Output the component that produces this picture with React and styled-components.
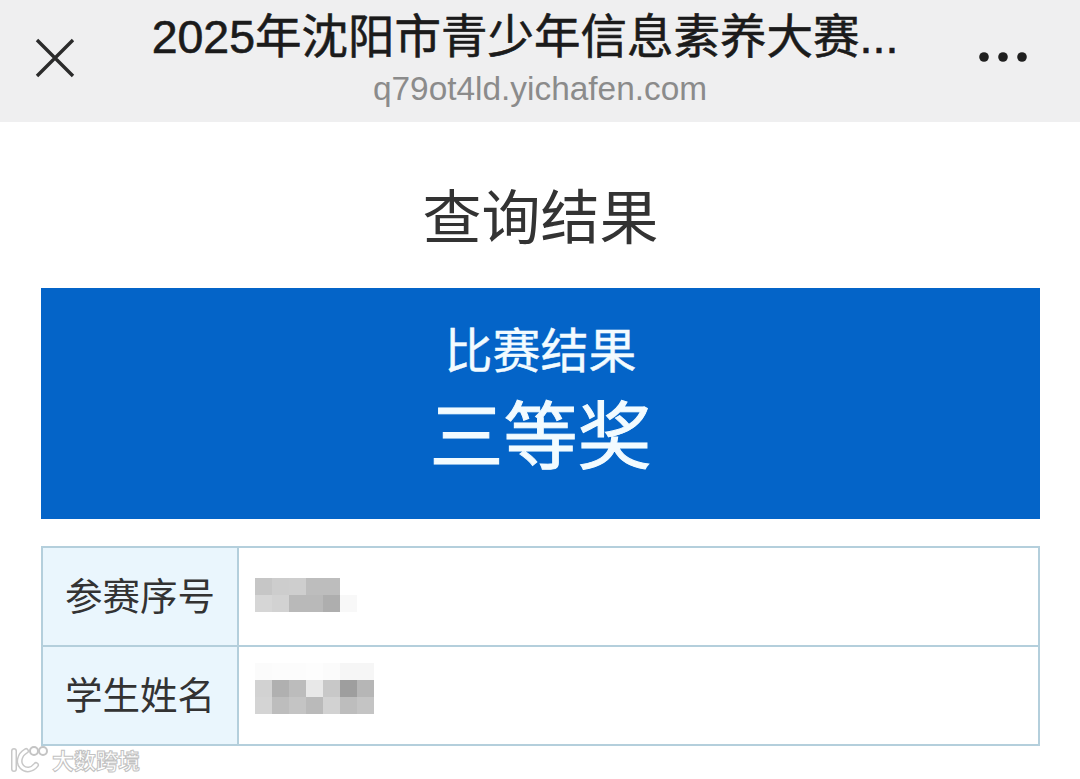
import styled, { createGlobalStyle } from "styled-components";

const GlobalStyle = createGlobalStyle`
  html, body {
    margin: 0;
    padding: 0;
    background: #fff;
  }
  body {
    font-family: "Liberation Sans", "Noto Sans CJK SC", sans-serif;
    overflow: hidden;
  }
`;

const mosaics = {
  serial: [
    ["#c6c6c6", "#cdcdcd", "#cecece", "#bdbdbd", "#bdbdbd", "#fff", "#fff"],
    ["#d6d6d6", "#d2d2d2", "#b9b9b9", "#b9b9b9", "#aeaeae", "#f8f8f8", "#fff"],
  ],
  name: [
    ["#fbfbfb", "#fcfcfc", "#fcfcfc", "#fdfdfd", "#fbfbfb", "#f6f6f6", "#f6f6f6"],
    ["#d2d2d2", "#b0b0b0", "#bcbcbc", "#e8e8e8", "#c8c8c8", "#9e9e9e", "#b6b6b6"],
    ["#d4d4d4", "#bdbdbd", "#c4c4c4", "#bababa", "#d2d2d2", "#bdbdbd", "#c4c4c4"],
  ],
};

const Page = styled.div`
  position: relative;
  width: 1080px;
  height: 779px;
  background: #fff;
  overflow: hidden;
`;

const TopBar = styled.header`
  height: 122px;
  background: #efeff0;
  display: grid;
  grid-template-columns: 110px 1fr 110px;
`;

const CloseSlot = styled.div`
  display: flex;
  justify-content: center;
  padding-top: 38px;
`;

const MoreSlot = styled.div`
  display: flex;
  justify-content: flex-start;
  padding: 50px 0 0 8px;
`;

const TitleBlock = styled.div`
  display: flex;
  flex-direction: column;
  align-items: center;
  padding-top: 8px;
`;

const PageName = styled.div`
  font-size: 46.5px;
  line-height: 58px;
  color: #1b1b1b;
  white-space: nowrap;
  -webkit-text-stroke: 0.6px #1b1b1b;
  margin-right: 30px;
`;

const Url = styled.div`
  font-size: 33.4px;
  line-height: 40px;
  color: #8b8b8b;
  white-space: nowrap;
  margin-top: 3px;
`;

const Content = styled.main`
  padding: 0 40px 0 41px;
  display: flex;
  flex-direction: column;
`;

const Heading = styled.h1`
  margin: 0;
  height: 166px;
  display: flex;
  align-items: center;
  justify-content: center;
  font-family: "Noto Sans CJK SC", sans-serif;
  font-size: 59px;
  font-weight: 400;
  color: #333;
  padding-top: 16px;
  box-sizing: border-box;
`;

const ResultBanner = styled.section`
  height: 231px;
  background: #0464c8;
  color: #f2fbff;
  display: flex;
  flex-direction: column;
  align-items: center;
  font-family: "Noto Sans CJK SC", sans-serif;
  padding-top: 32px;
  box-sizing: border-box;
`;

const BannerLabel = styled.div`
  font-size: 48px;
  line-height: 54px;
  -webkit-text-stroke: 0.4px #f2fbff;
`;

const BannerPrize = styled.div`
  font-size: 74px;
  line-height: 80px;
  -webkit-text-stroke: 1px #f2fbff;
  margin-top: 17px;
`;

const InfoTable = styled.div`
  margin-top: 27px;
  border: 2px solid #b4cfdc;
  display: grid;
  grid-template-columns: 196px 1fr;
  grid-template-rows: 97px 99px;
  font-family: "Noto Sans CJK SC", sans-serif;
`;

const LabelCell = styled.div`
  background: #eaf6fd;
  border-right: 2px solid #b4cfdc;
  border-top: ${(p) => (p.$first ? "none" : "2px solid #b4cfdc")};
  display: flex;
  align-items: center;
  justify-content: center;
  font-size: 37.5px;
  color: #333;
  padding-bottom: 6px;
`;

const ValueCell = styled.div`
  border-top: ${(p) => (p.$first ? "none" : "2px solid #b4cfdc")};
  padding: ${(p) => (p.$first ? "30px 0 0 16px" : "16px 0 0 16px")};
  background: #fff;
`;

const Mosaic = styled.div`
  display: grid;
  grid-template-columns: repeat(7, 17px);
  grid-auto-rows: 17px;
`;

const MosaicCell = styled.span`
  background: ${(p) => p.$shade};
`;

const Watermark = styled.div`
  position: absolute;
  left: 10px;
  bottom: 6px;
  display: flex;
  align-items: center;
  gap: 4px;
  color: #fff;
  font-family: "Noto Sans CJK SC", sans-serif;
  font-size: 22px;
  font-weight: 700;
  line-height: 28px;
  -webkit-text-stroke: 1px #c2c2c2;
`;

const CloseIcon = () => (
  <svg width="40" height="40" viewBox="0 0 40 40" fill="none">
    <path d="M2 2 L38 38 M38 2 L2 38" stroke="#2b2b2b" strokeWidth="3.4" />
  </svg>
);

const MoreIcon = () => (
  <svg width="50" height="14" viewBox="0 0 50 14" fill="#1f1f1f">
    <circle cx="6" cy="7" r="4.8" />
    <circle cx="25" cy="7" r="4.8" />
    <circle cx="44" cy="7" r="4.8" />
  </svg>
);

const WatermarkLogo = () => (
  <svg width="38" height="28" viewBox="0 0 38 28" fill="none">
    <path d="M4 6 L4 24" stroke="#c8c8c8" strokeWidth="6" strokeLinecap="round" />
    <path d="M4 6 L4 24" stroke="#fff" strokeWidth="3" strokeLinecap="round" />
    <path d="M16 6 C9 10 8 18 12 22 C16 26 22 25 26 20" stroke="#c8c8c8" strokeWidth="6" strokeLinecap="round" />
    <path d="M16 6 C9 10 8 18 12 22 C16 26 22 25 26 20" stroke="#fff" strokeWidth="3" strokeLinecap="round" />
    <circle cx="24" cy="6" r="4" stroke="#c4c4c4" strokeWidth="2" />
    <circle cx="33" cy="6" r="4" stroke="#c4c4c4" strokeWidth="2" />
  </svg>
);

const MosaicBlock = ({ rows }) => (
  <Mosaic>
    {rows.flat().map((shade, index) => (
      <MosaicCell key={index} $shade={shade} />
    ))}
  </Mosaic>
);

const App = () => {
  return (
    <Page>
      <GlobalStyle />
      <TopBar>
        <CloseSlot>
          <CloseIcon />
        </CloseSlot>
        <TitleBlock>
          <PageName>2025年沈阳市青少年信息素养大赛...</PageName>
          <Url>q79ot4ld.yichafen.com</Url>
        </TitleBlock>
        <MoreSlot>
          <MoreIcon />
        </MoreSlot>
      </TopBar>
      <Content>
        <Heading>查询结果</Heading>
        <ResultBanner>
          <BannerLabel>比赛结果</BannerLabel>
          <BannerPrize>三等奖</BannerPrize>
        </ResultBanner>
        <InfoTable>
          <LabelCell $first>参赛序号</LabelCell>
          <ValueCell $first>
            <MosaicBlock rows={mosaics.serial} />
          </ValueCell>
          <LabelCell>学生姓名</LabelCell>
          <ValueCell>
            <MosaicBlock rows={mosaics.name} />
          </ValueCell>
        </InfoTable>
      </Content>
      <Watermark>
        <WatermarkLogo />
        <span>大数跨境</span>
      </Watermark>
    </Page>
  );
};

export default App;
